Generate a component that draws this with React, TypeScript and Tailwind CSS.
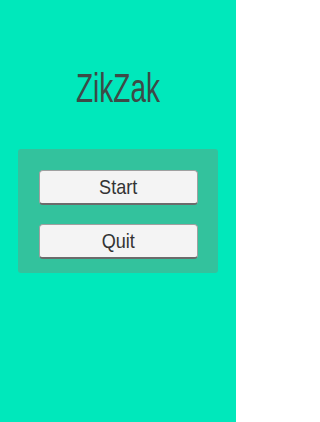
export default function App() {
  return (
    <div
      className="flex h-[422px] w-[236px] flex-col bg-[#00e8bb]"
      style={{ fontFamily: '"Liberation Sans", Arial, sans-serif' }}
    >
      <div className="flex h-[149px] items-start justify-center pt-[64px]">
        <h1 className="origin-center scale-x-[0.7] text-[40px] leading-[48px] text-[#3d4a47]">
          ZikZak
        </h1>
      </div>
      <div className="mx-[18px] flex flex-col gap-[19px] rounded-[3px] bg-[#33c29d] pt-[21px] pb-[14px] pl-[21px] pr-[20px]">
        <button className="flex h-[35px] items-center justify-center rounded-[4px] border border-b-2 border-[#a0a0a0] border-b-[#6b6b6b] bg-[#f4f4f4] text-[21px] text-[#333]">
          <span className="inline-block scale-x-[0.86]">Start</span>
        </button>
        <button className="flex h-[35px] items-center justify-center rounded-[4px] border border-b-2 border-[#a0a0a0] border-b-[#6b6b6b] bg-[#f4f4f4] text-[21px] text-[#333]">
          <span className="inline-block scale-x-[0.86]">Quit</span>
        </button>
      </div>
    </div>
  );
}
